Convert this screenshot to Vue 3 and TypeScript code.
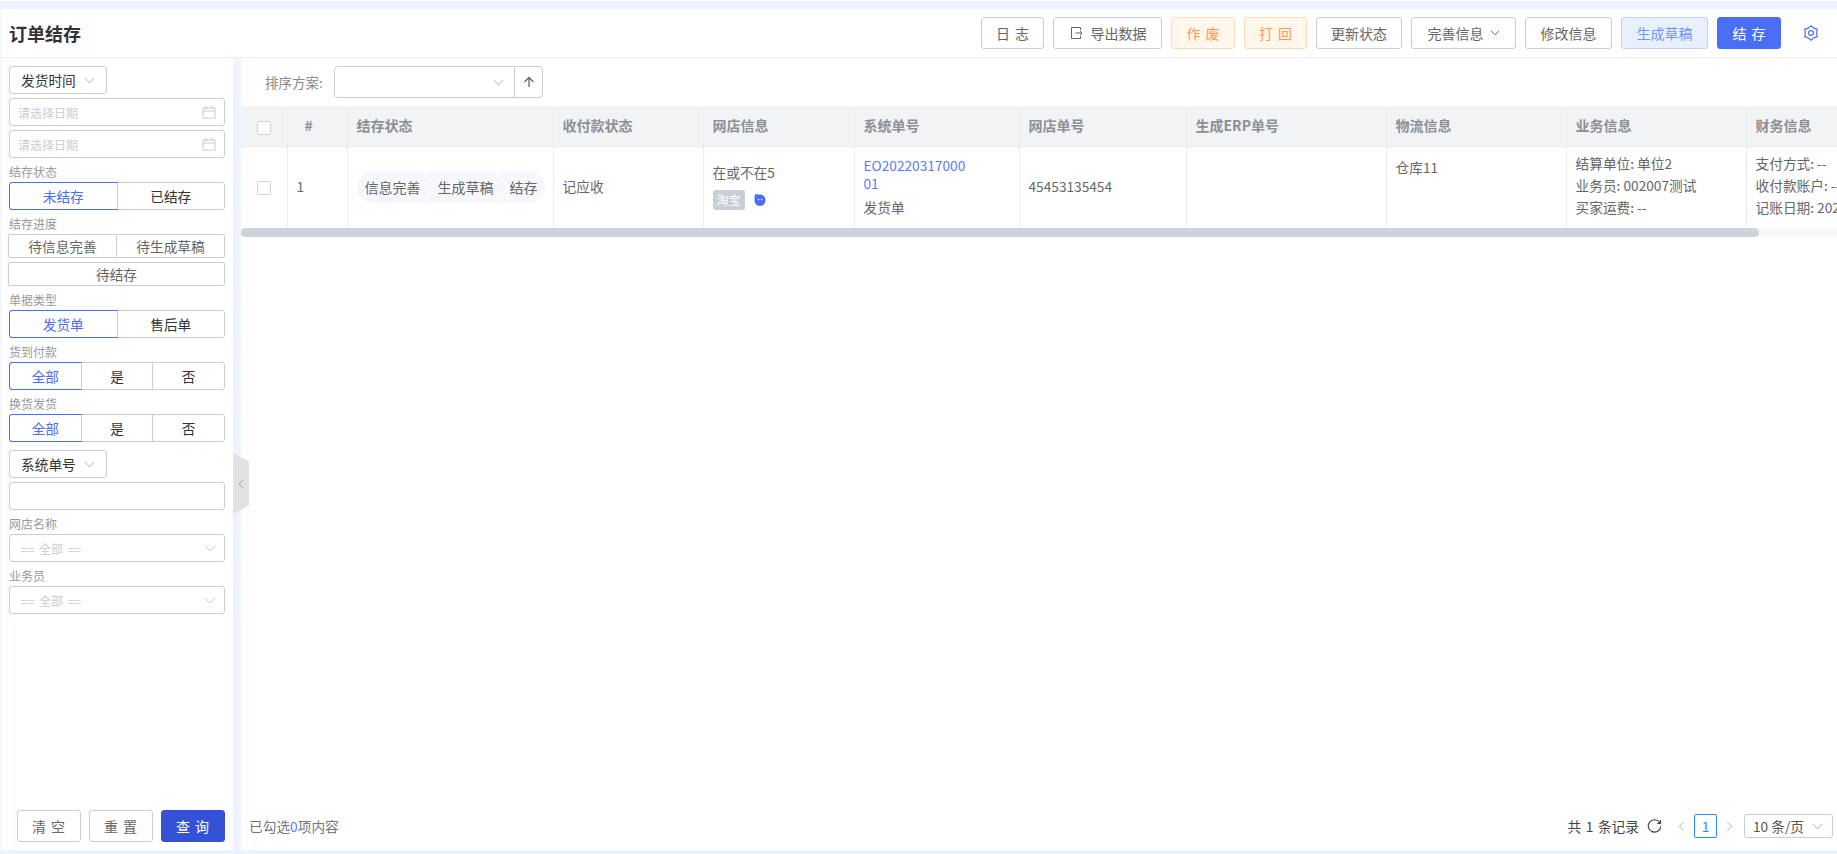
<template>
  <div class="page">
    <header class="topbar">
      <h1 class="title">订单结存</h1>
      <div class="actions">
        <button class="btn w63">日 志</button>
        <button class="btn w109">
          <svg class="ico" viewBox="0 0 14 14" width="14" height="14"><path d="M11.500 4V1.500h-9v11h9V10M6.500 7H13M11 5l2 2-2 2" fill="none" stroke="#666" stroke-width="1"/></svg>
          <span class="ml8">导出数据</span>
        </button>
        <button class="btn warn w64">作 废</button>
        <button class="btn warn w63">打 回</button>
        <button class="btn w86">更新状态</button>
        <button class="btn w105">完善信息
          <svg class="ml6" viewBox="0 0 10 6" width="10" height="6"><path d="M1 .8l4 4 4-4" fill="none" stroke="#666"/></svg>
        </button>
        <button class="btn w87">修改信息</button>
        <button class="btn draft w87">生成草稿</button>
        <button class="btn primary w64">结 存</button>
        <svg class="gear" viewBox="0 0 16 16" width="16" height="16"><path d="M8 .8l2.800 2.350 3.440 1.250-.64 3.600.64 3.600-3.440 1.250L8 15.200l-2.800-2.350-3.440-1.250.64-3.600-.64-3.600 3.440-1.250z" fill="none" stroke="#4a6ef5" stroke-width="1.200" stroke-linejoin="round"/><circle cx="8" cy="8" r="2.400" fill="none" stroke="#4a6ef5" stroke-width="1.200"/></svg>
      </div>
    </header>

    <div class="body">
      <aside class="side">
        <div class="filters">
          <div class="drop">发货时间<svg viewBox="0 0 10 6" width="11" height="7"><path d="M.7.7L5 5 9.300.7" fill="none" stroke="#c6c9d0"/></svg></div>
          <div v-for="n in 2" :key="n" class="input mt4">
            <span class="ph">请选择日期</span>
            <svg viewBox="0 0 14 14" width="14" height="14"><path d="M1 3h12v10H1zM1 6h12M4 1v3M10 1v3" fill="none" stroke="#c6c9d0"/></svg>
          </div>

          <template v-for="g in groups" :key="g.label">
            <div class="label">{{ g.label }}</div>
            <div class="seg">
              <div v-for="(o, i) in g.options" :key="o" class="seg-item" :class="{ on: i === 0 }">{{ o }}</div>
            </div>
            <template v-if="g.label === '结存状态'">
              <div class="label">结存进度</div>
              <div class="seg small">
                <div class="seg-item grey">待信息完善</div>
                <div class="seg-item grey">待生成草稿</div>
              </div>
              <div class="seg small mt4">
                <div class="seg-item grey">待结存</div>
              </div>
            </template>
          </template>

          <div class="drop mt8">系统单号<svg viewBox="0 0 10 6" width="11" height="7"><path d="M.7.7L5 5 9.300.7" fill="none" stroke="#c6c9d0"/></svg></div>
          <div class="input mt4"></div>

          <template v-for="s in ['网店名称', '业务员']" :key="s">
            <div class="label">{{ s }}</div>
            <div class="input">
              <span class="ph ph-all">== 全部 ==</span>
              <svg viewBox="0 0 12 7" width="12" height="7"><path d="M.7.7L6 6 11.300.7" fill="none" stroke="#c6c9d0"/></svg>
            </div>
          </template>
        </div>

        <div class="side-foot">
          <button class="btn foot">清 空</button>
          <button class="btn foot">重 置</button>
          <button class="btn foot query">查 询</button>
        </div>
      </aside>

      <div class="handle">
        <svg viewBox="0 0 6 10" width="6" height="10"><path d="M5 1L1 5l4 4" fill="none" stroke="#aaa"/></svg>
      </div>

      <main class="main">
        <div class="sortbar">
          <span class="sort-label">排序方案:</span>
          <div class="sort-box">
            <div class="sort-select"><svg viewBox="0 0 10 6" width="11" height="7"><path d="M.7.7L5 5 9.300.7" fill="none" stroke="#c6c9d0"/></svg></div>
            <div class="sort-btn"><svg viewBox="0 0 12 12" width="12" height="12"><path d="M6 11V1.500M1.500 6L6 1.500 10.500 6" fill="none" stroke="#666" stroke-width="1.300"/></svg></div>
          </div>
        </div>

        <div class="table-wrap">
          <table class="grid">
            <colgroup>
              <col v-for="(w, i) in colWidths" :key="i" :style="{ width: w + 'px' }" />
            </colgroup>
            <thead>
              <tr>
                <th><span class="check head"></span></th>
                <th class="num">#</th>
                <th v-for="h in headers" :key="h">{{ h }}</th>
              </tr>
            </thead>
            <tbody>
              <tr>
                <td><span class="check"></span></td>
                <td class="up">1</td>
                <td>
                  <div class="steps">
                    <span>信息完善</span>
                    <svg class="chev" viewBox="0 0 16 32" width="17" height="32"><path d="M2 0l12 16L2 32" fill="none" stroke="#fff" stroke-width="1.500"/></svg>
                    <span>生成草稿</span>
                    <svg class="chev" viewBox="0 0 16 32" width="16" height="32"><path d="M2 0l12 16L2 32" fill="none" stroke="#fff" stroke-width="1.500"/></svg>
                    <span>结存</span>
                  </div>
                </td>
                <td class="up">记应收</td>
                <td class="up">
                  <div class="shop-name">在或不在5</div>
                  <div class="shop-tags">
                    <span class="tag">淘宝</span>
                    <svg viewBox="0 0 12 14" width="12" height="14"><path d="M1 1.500C2.500 1 3.500 1.600 6 1.600c3.300 0 5.500 2.400 5.500 5.700S9.300 13 6 13 .5 10.600.5 7.300C.5 5 .6 3 1 1.500z" fill="#4a6ef5"/><circle cx="4.600" cy="6.500" r=".7" fill="#fff"/><circle cx="7.600" cy="6.500" r=".7" fill="#fff"/></svg>
                  </div>
                </td>
                <td>
                  <a class="link">EO2022031700001</a>
                  <div class="doc-type">发货单</div>
                </td>
                <td class="up">45453135454</td>
                <td></td>
                <td class="top">仓库11</td>
                <td class="up2">
                  <div class="info">结算单位: 单位2</div>
                  <div class="info">业务员: 002007测试</div>
                  <div class="info">买家运费: --</div>
                </td>
                <td class="up2">
                  <div class="info">支付方式: --</div>
                  <div class="info">收付款账户: --</div>
                  <div class="info">记账日期: 2022-03-17</div>
                </td>
              </tr>
            </tbody>
          </table>
        </div>
        <div class="hscroll"><div class="thumb"></div></div>

        <footer class="foot-bar">
          <div class="picked">已勾选<em>0</em>项内容</div>
          <div class="pager">
            <span class="total">共 1 条记录</span>
            <svg class="refresh" viewBox="0 0 14 14" width="15" height="15"><path d="M12 3.500A5.800 5.800 0 1 0 12.800 7M12.500 1v3h-3" fill="none" stroke="#444" stroke-width="1.100"/></svg>
            <svg class="arrow" viewBox="0 0 6 10" width="7" height="11"><path d="M5 1L1 5l4 4" fill="none" stroke="#c6c9d0"/></svg>
            <span class="page-no">1</span>
            <svg class="arrow" viewBox="0 0 6 10" width="7" height="11"><path d="M1 1l4 4-4 4" fill="none" stroke="#c6c9d0"/></svg>
            <div class="size">10 条/页<svg viewBox="0 0 10 6" width="11" height="7"><path d="M.7.7L5 5 9.300.7" fill="none" stroke="#c6c9d0"/></svg></div>
          </div>
        </footer>
      </main>
    </div>
  </div>
</template>

<script setup lang="ts">
interface Group {
  label: string
  options: string[]
}

const groups: Group[] = [
  { label: '结存状态', options: ['未结存', '已结存'] },
  { label: '单据类型', options: ['发货单', '售后单'] },
  { label: '货到付款', options: ['全部', '是', '否'] },
  { label: '换货发货', options: ['全部', '是', '否'] },
]

const headers = ['结存状态', '收付款状态', '网店信息', '系统单号', '网店单号', '生成ERP单号', '物流信息', '业务信息', '财务信息']
const colWidths = [46, 60, 206, 150, 151, 165, 167, 200, 180, 180, 180]
</script>

<style>
html,
body {
  margin: 0;
  background: #edf3ff;
}
</style>

<style scoped>
* {
  box-sizing: border-box;
}

.page {
  width: 1837px;
  height: 854px;
  padding: 8px 0 4px 1px;
  display: flex;
  flex-direction: column;
  background: #edf3ff;
  border-top: 1px solid #fff;
  overflow: hidden;
  font-family: "Noto Sans CJK SC", "Noto Sans", sans-serif;
  font-size: 14px;
  color: #666;
}

.topbar {
  height: 49px;
  flex: none;
  display: flex;
  align-items: center;
  justify-content: space-between;
  padding: 0 0 0 8px;
  background: #fff;
  border-bottom: 1px solid #edeef0;
}

.title {
  margin: 0;
  font-size: 18px;
  font-weight: 700;
  color: #333;
}

.actions {
  display: flex;
  align-items: center;
  gap: 9px;
  margin-top: -1px;
}

.btn {
  height: 32px;
  padding: 0;
  display: inline-flex;
  align-items: center;
  justify-content: center;
  font: inherit;
  color: #666;
  word-spacing: 2px;
  background: #fff;
  border: 1px solid #c8cdd8;
  border-radius: 3px;
}

.w63 { width: 63px; }
.w64 { width: 64px; }
.w86 { width: 86px; }
.w87 { width: 87px; }
.w105 { width: 105px; }
.w109 { width: 109px; }
.ml6 { margin-left: 6px; }
.ml8 { margin-left: 8px; }

.warn {
  color: #ff9a4d;
  background: #fff6ec;
  border-color: #ffdcb8;
}

.draft {
  color: #6f94ff;
  background: #e8f0ff;
  border-color: #c0d3ff;
}

.primary {
  color: #fff;
  background: #4a6ef5;
  border-color: #4a6ef5;
}

.gear {
  margin: 0 18px 0 13px;
}

.body {
  flex: 1;
  min-height: 0;
  display: flex;
  position: relative;
}

.side {
  width: 232px;
  flex: none;
  display: flex;
  flex-direction: column;
  justify-content: space-between;
  padding: 8px;
  background: #fff;
}

.filters {
  display: flex;
  flex-direction: column;
}

.drop {
  width: 98px;
  height: 28px;
  display: flex;
  align-items: center;
  justify-content: space-between;
  padding: 0 11px;
  color: #333;
  font-size: 13.700px;
  border: 1px solid #c8cdd8;
  border-radius: 3px;
  background: #fff;
}

.input {
  height: 28px;
  display: flex;
  align-items: center;
  justify-content: space-between;
  padding: 0 8px;
  border: 1px solid #c8cdd8;
  border-radius: 3px;
}

.mt4 { margin-top: 4px; }
.mt8 { margin-top: 8px; }

.ph {
  font-size: 12px;
  color: #c8ccd3;
}

.ph-all {
  padding-left: 3px;
  word-spacing: 2px;
}

.label {
  height: 24px;
  padding-top: 5px;
  font-size: 12px;
  line-height: 17px;
  color: #999;
}

.seg {
  height: 28px;
  display: flex;
  border: 1px solid #c8cdd8;
  border-radius: 3px;
}

.seg.small {
  height: 24px;
  margin-left: -1px;
  border-radius: 2px;
}

.seg-item {
  flex: 1;
  display: flex;
  align-items: center;
  justify-content: center;
  color: #333;
  border-left: 1px solid #c8cdd8;
  font-size: 13.700px;
}

.seg-item:first-child {
  border-left: 0;
}

.seg-item.grey {
  color: #666;
}

.seg-item.on {
  margin: -1px;
  color: #4a6ef5;
  border: 1px solid #4a6ef5;
  border-radius: 3px 0 0 3px;
}

.side-foot {
  display: flex;
  justify-content: flex-end;
  gap: 8px;
}

.foot {
  width: 64px;
  letter-spacing: 1px;
  word-spacing: 0;
}

.query {
  color: #fff;
  background: #3352d6;
  border-color: #3352d6;
}

.handle {
  position: absolute;
  left: 232px;
  top: 395px;
  width: 16px;
  height: 61px;
  display: flex;
  align-items: center;
  justify-content: center;
  background: #e2e2e2;
  clip-path: polygon(0 0, 100% 14%, 100% 86%, 0 100%);
}

.main {
  flex: 1;
  min-width: 0;
  margin-left: 8px;
  display: flex;
  flex-direction: column;
  background: #fff;
}

.sortbar {
  height: 48px;
  flex: none;
  display: flex;
  align-items: flex-start;
  padding: 8px 0 0 24px;
}

.sort-label {
  width: 69px;
  line-height: 32px;
  font-size: 13.500px;
  color: #888;
}

.sort-box {
  width: 209px;
  height: 32px;
  display: flex;
  border: 1px solid #c8cdd8;
  border-radius: 4px;
}

.sort-select {
  flex: 1;
  display: flex;
  align-items: center;
  justify-content: flex-end;
  padding-right: 10px;
  border-right: 1px solid #c8cdd8;
}

.sort-btn {
  width: 27px;
  display: flex;
  align-items: center;
  justify-content: center;
}

.table-wrap {
  flex: none;
  overflow: hidden;
}

.grid {
  width: 1685px;
  table-layout: fixed;
  border-collapse: collapse;
}

th,
td {
  padding: 0 9px;
  border-right: 1px solid #ebedf2;
  text-align: left;
  white-space: nowrap;
}

th {
  height: 40px;
  padding-bottom: 2px;
  font-size: 14px;
  font-weight: 700;
  color: #8b8f98;
  background: #f2f3f5;
  border-bottom: 1px solid #ebedf2;
}

th.num {
  padding-left: 17px;
}

td {
  height: 82px;
  color: #666;
  font-size: 13.700px;
  line-height: 22px;
  vertical-align: middle;
}

td.up {
  padding-bottom: 2px;
}

td.up2 {
  padding-bottom: 4px;
}

td.top {
  vertical-align: top;
  padding-top: 9px;
}

.check {
  display: block;
  width: 14px;
  height: 14px;
  margin: 2px 0 0 7px;
  border: 1px solid #cfd3da;
  border-radius: 2px;
  background: #fff;
}

.check.head {
  margin-top: 6px;
}

.steps {
  width: 188px;
  height: 32px;
  display: flex;
  align-items: center;
  padding: 0 7px 0 8px;
  font-size: 14px;
  border-radius: 16px;
  background: #f5f7fa;
}

.chev {
  flex: none;
}

.shop-name {
  line-height: 20px;
}

.shop-tags {
  display: flex;
  align-items: center;
  gap: 9px;
  margin-top: 8px;
}

.tag {
  width: 32px;
  height: 20px;
  font-size: 12px;
  line-height: 20px;
  text-align: center;
  color: #fff;
  background: #c8cdd6;
  border-radius: 2px;
}

.link {
  display: block;
  width: 105px;
  white-space: normal;
  word-break: break-all;
  line-height: 18px;
  color: #5b7cf5;
}

.doc-type {
  margin-top: 4px;
}

.hscroll {
  flex: none;
  height: 9px;
  background: #f7f8f9;
}

.thumb {
  width: 1518px;
  height: 100%;
  border-radius: 5px;
  background: #cdd3da;
}

.foot-bar {
  flex: 1;
  display: flex;
  align-items: flex-end;
  justify-content: space-between;
  padding: 0 4px 12px 8px;
}

.picked {
  font-size: 13.700px;
  line-height: 24px;
  color: #777;
}

.picked em {
  font-style: normal;
  color: #5b7cf5;
}

.pager {
  height: 24px;
  display: flex;
  align-items: center;
  color: #444;
  font-size: 13.700px;
}

.total {
  word-spacing: 1.500px;
}

.refresh {
  margin: 0 16px 0 8px;
}

.page-no {
  width: 23px;
  height: 24px;
  margin: 0 9px;
  text-align: center;
  line-height: 22px;
  color: #2d8cf0;
  border: 1px solid #2d8cf0;
  border-radius: 2px;
}

.size {
  width: 89px;
  height: 24px;
  margin-left: 11px;
  display: flex;
  align-items: center;
  justify-content: space-between;
  padding: 0 9px 0 8px;
  border: 1px solid #c8cdd8;
  border-radius: 3px;
  color: #555;
}
</style>
